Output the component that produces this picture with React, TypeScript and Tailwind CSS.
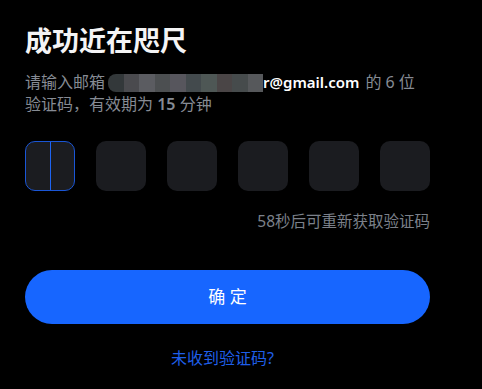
import React from "react";

const mosaic = [
  "#33383a",
  "#4a4a4e",
  "#5b5c61",
  "#4c4f51",
  "#57565d",
  "#434a4d",
  "#4e5755",
  "#4a4546",
  "#464b4c",
  "#56585b",
];

export default function App() {
  return (
    <div
      className="w-[482px] h-[389px] bg-black overflow-hidden"
      style={{ fontFamily: '"Noto Sans", "Noto Sans CJK SC", sans-serif' }}
    >
      <div className="w-[405px] ml-[25px] pt-[23px] flex flex-col">
        <h1
          className="text-[27px] leading-[34px] font-bold text-[#f4f4f5]"
          style={{ fontFamily: '"Noto Sans CJK SC", sans-serif' }}
        >
          成功近在咫尺
        </h1>
        <p className="mt-[14px] text-[16px] leading-[22px] text-[#868b94]">
          请输入邮箱
          <span className="ml-[3px] inline-flex align-[-4px] h-[18px] overflow-hidden rounded-l-[8px]">
            {mosaic.map((c, i) => (
              <span
                key={i}
                className="inline-block w-[15.5px] h-[18px]"
                style={{ backgroundColor: c }}
              />
            ))}
          </span>
          <span className="font-semibold text-white text-[15px]">r@gmail.com</span>
          <span className="ml-[6px]">的 6 位</span>验证码，有效期为{" "}
          <span className="font-semibold">15</span> 分钟
        </p>
        <div className="mt-[26px] flex gap-[21px]">
          <div className="w-[50px] h-[50px] rounded-[10px] bg-[#1b1c20] border border-[#1a56d6] flex justify-center">
            <div className="w-px h-full bg-[#1e64f2]" />
          </div>
          {[0, 1, 2, 3, 4].map((i) => (
            <div key={i} className="w-[50px] h-[50px] rounded-[10px] bg-[#1b1c20]" />
          ))}
        </div>
        <div className="mt-[20px] text-right text-[15.5px] leading-[20px] text-[#7b808a]">
          58秒后可重新获取验证码
        </div>
        <button className="mt-[39px] h-[54px] w-full rounded-full bg-[#1766ff] text-white text-[17px] flex items-center justify-center">
          确 定
        </button>
        <div className="mt-[23px] text-center text-[16px] leading-[22px] text-[#1f5fe8] pr-[10px]">
          未收到验证码?
        </div>
      </div>
    </div>
  );
}
